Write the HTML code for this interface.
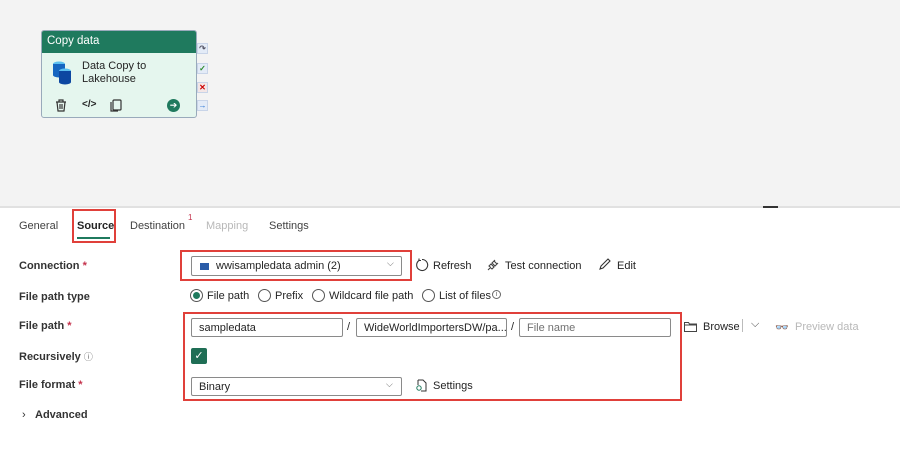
<!DOCTYPE html>
<html><head><meta charset="utf-8"><style>
*{box-sizing:border-box;margin:0;padding:0}
body{width:900px;height:458px;overflow:hidden;background:#fff;font-family:"Liberation Sans",sans-serif;font-size:11px;color:#242424;position:relative}
.a{position:absolute;white-space:nowrap}
.canvas{position:absolute;left:0;top:0;width:900px;height:206px;background:#f3f3f3}
.sep{position:absolute;left:0;top:206px;width:900px;height:2px;background:#e1e1e1}
.red{position:absolute;border:2px solid #e0403a}
.inp{position:absolute;border:1px solid #8a8a8a;border-radius:2px;background:#fff;height:19px;padding:3px 7px;font-size:11px;white-space:nowrap;overflow:hidden}
.lbl{font-weight:bold;color:#333}
.star{color:#c4314b}
.radio{position:absolute;width:13px;height:13px;border:1px solid #555;border-radius:50%;background:#fff}
.tab{position:absolute;top:220px;font-size:11px}
.side{position:absolute;left:197px;width:11px;height:11px;background:#e3ebf7;border:1px solid #c8d4e8;font-size:8px;line-height:9px;text-align:center;font-weight:bold}
</style></head><body>
<div class="canvas"></div>
<div class="sep"></div>
<div class="a" style="left:763px;top:206px;width:15px;height:2px;background:#333"></div>

<!-- card -->
<div class="a" style="left:41px;top:30px;width:156px;height:88px;border:1px solid #9ab;border-radius:3px;background:#e5f6ee;overflow:hidden">
 <div style="height:22px;background:#1f7a5e;color:#fff;font-size:11.5px;padding:4px 5px">Copy data</div>
 <svg class="a" style="left:9px;top:29px" width="22" height="26" viewBox="0 0 22 26"><ellipse cx="8" cy="4" rx="6" ry="2.5" fill="#5cc0f0"/><rect x="2" y="4" width="12" height="11" fill="#1565c0"/><ellipse cx="8" cy="15" rx="6" ry="2.5" fill="#1565c0"/><ellipse cx="14" cy="11" rx="6" ry="2.5" fill="#5cc0f0"/><rect x="8" y="11" width="12" height="11" fill="#0d47a1"/><ellipse cx="14" cy="22" rx="6" ry="2.5" fill="#0d47a1"/></svg>
 <div class="a" style="left:40px;top:29px;font-size:11px;line-height:13px">Data Copy to<br>Lakehouse</div>
 <svg class="a" style="left:13px;top:68px" width="12" height="13" viewBox="0 0 12 13" fill="none" stroke="#333" stroke-width="1.2"><path d="M1 3h10M4 3V1h4v2M2 3l1 9h6l1-9M5 5v5M7 5v5"/></svg>
 <div class="a" style="left:40px;top:68px;font-size:10px;font-weight:bold">&lt;/&gt;</div>
 <svg class="a" style="left:68px;top:68px" width="12" height="13" viewBox="0 0 12 13" fill="none" stroke="#333" stroke-width="1.2"><rect x="3" y="1" width="8" height="10" rx="1"/><path d="M1 3v9h7"/></svg>
 <div class="a" style="left:125px;top:68px;width:13px;height:13px;border-radius:50%;background:#1f7a5e;color:#fff;font-size:9px;text-align:center;line-height:13px">➔</div>
</div>
<div class="side" style="top:43px;color:#556">↷</div>
<div class="side" style="top:63px;color:#2a8a2a">✓</div>
<div class="side" style="top:82px;color:#c00;background:#f3e6e6">✕</div>
<div class="side" style="top:100px;color:#1a6ad0">→</div>

<!-- tabs -->
<div class="tab" style="left:19px;color:#424242">General</div>
<div class="tab" style="left:77px;font-weight:bold">Source</div>
<div class="a" style="left:77px;top:237px;width:33px;height:2px;background:#1f7a5e"></div>
<div class="red" style="left:72px;top:209px;width:44px;height:34px"></div>
<div class="tab" style="left:130px;color:#424242">Destination</div>
<div class="a" style="left:188px;top:213px;color:#c4314b;font-size:8px">1</div>
<div class="tab" style="left:206px;color:#b8b8b8">Mapping</div>
<div class="tab" style="left:269px;color:#424242">Settings</div>

<!-- connection -->
<div class="a lbl" style="left:19px;top:260px">Connection <span class="star">*</span></div>
<div class="inp" style="left:191px;top:256px;width:211px;height:20px;padding:3px 8px"><span style="display:inline-block;width:9px;height:7px;background:#2a5ca8;margin-right:7px;vertical-align:-1px"></span>wwisampledata admin (2)</div>
<div class="a" style="left:387px;top:258px;color:#666;font-size:9px">⌵</div>
<div class="red" style="left:180px;top:250px;width:232px;height:31px"></div>
<svg class="a" style="left:415px;top:258px" width="14" height="14" viewBox="0 0 14 14" fill="none" stroke="#333" stroke-width="1.1"><path d="M4 2.5A5.5 5.5 0 1 0 7 1.5M4 2.5V0.5M4 2.5H6"/></svg>
<div class="a" style="left:433px;top:260px">Refresh</div>
<svg class="a" style="left:486px;top:258px" width="14" height="14" viewBox="0 0 14 14" fill="none" stroke="#444" stroke-width="1.1"><path d="M2 12l3-3M9 2L7 4M12 5l-2 2M5 6l3 3-2 2-3-3zM8 3l3 3 -2 2-3-3z"/></svg>
<div class="a" style="left:505px;top:260px">Test connection</div>
<svg class="a" style="left:598px;top:258px" width="13" height="13" viewBox="0 0 13 13" fill="none" stroke="#333" stroke-width="1.1"><path d="M2 11l1-3 7-7 2 2-7 7z"/></svg>
<div class="a" style="left:617px;top:260px">Edit</div>

<!-- file path type -->
<div class="a lbl" style="left:19px;top:291px">File path type</div>
<div class="radio" style="left:190px;top:289px"></div><div class="a" style="left:193px;top:292px;width:7px;height:7px;border-radius:50%;background:#1f7a5e"></div>
<div class="a" style="left:207px;top:290px">File path</div>
<div class="radio" style="left:258px;top:289px"></div><div class="a" style="left:275px;top:290px">Prefix</div>
<div class="radio" style="left:312px;top:289px"></div><div class="a" style="left:329px;top:290px">Wildcard file path</div>
<div class="radio" style="left:422px;top:289px"></div><div class="a" style="left:439px;top:290px">List of files</div>
<div class="a" style="left:492px;top:290px;width:9px;height:9px;border:1px solid #666;border-radius:50%;font-size:7px;line-height:8px;text-align:center;color:#666">i</div>

<!-- file path -->
<div class="a lbl" style="left:19px;top:320px">File path <span class="star">*</span></div>
<div class="inp" style="left:191px;top:318px;width:152px">sampledata</div>
<div class="a" style="left:347px;top:321px">/</div>
<div class="inp" style="left:356px;top:318px;width:151px">WideWorldImportersDW/pa...</div>
<div class="a" style="left:511px;top:321px">/</div>
<div class="inp" style="left:519px;top:318px;width:152px;color:#707070">File name</div>
<svg class="a" style="left:684px;top:321px" width="13" height="11" viewBox="0 0 13 11" fill="none" stroke="#444" stroke-width="1"><path d="M0.5 1.5h4l1 1.5h7v7.5h-12z M0.5 4h12"/></svg>
<div class="a" style="left:703px;top:321px">Browse</div>
<div class="a" style="left:742px;top:319px;width:1px;height:13px;background:#bbb"></div>
<div class="a" style="left:751px;top:318px;color:#444;font-size:11px">⌵</div>
<div class="a" style="left:775px;top:321px;color:#bbb">👓</div>
<div class="a" style="left:795px;top:321px;color:#b8b8b8">Preview data</div>
<div class="red" style="left:183px;top:312px;width:499px;height:89px"></div>

<!-- recursively -->
<div class="a lbl" style="left:19px;top:350px">Recursively <span style="font-weight:normal;color:#666;font-size:9px">ⓘ</span></div>
<div class="a" style="left:191px;top:348px;width:16px;height:16px;background:#1f6e55;border-radius:2px;color:#fff;font-size:11px;text-align:center;line-height:16px">✓</div>

<!-- file format -->
<div class="a lbl" style="left:19px;top:379px">File format <span class="star">*</span></div>
<div class="inp" style="left:191px;top:377px;width:211px">Binary</div>
<div class="a" style="left:386px;top:379px;color:#666;font-size:9px">⌵</div>
<svg class="a" style="left:415px;top:379px" width="12" height="13" viewBox="0 0 12 13" fill="none" stroke="#333" stroke-width="1"><path d="M3 1h5l3 3v8H6M3 1v5"/><circle cx="4" cy="9" r="2.2" stroke="#1f7a5e"/></svg>
<div class="a" style="left:433px;top:380px">Settings</div>

<div class="a" style="left:22px;top:409px;color:#333">›</div>
<div class="a" style="left:35px;top:409px;font-weight:bold;color:#333">Advanced</div>
</body></html>
